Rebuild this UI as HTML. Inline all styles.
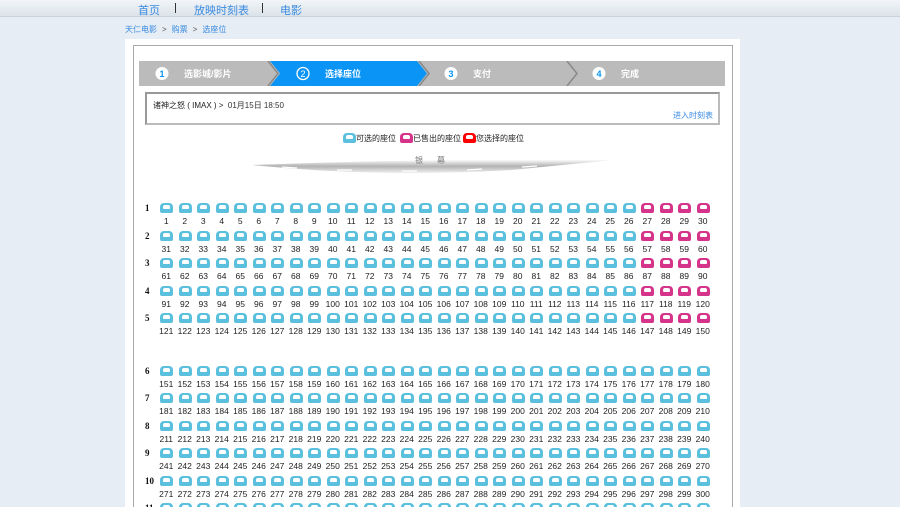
<!DOCTYPE html>
<html><head><meta charset="utf-8"><style>
*{margin:0;padding:0;box-sizing:border-box}
html,body{width:900px;height:507px;overflow:hidden}
body{background:#e6edf5;font-family:"Liberation Sans","Noto Sans CJK SC",sans-serif;position:relative}
.nav{position:absolute;left:0;top:0;width:900px;height:17px;background:linear-gradient(#f2f5f8,#dbe3ea);border-bottom:1px solid #c9d3dd}
.nav span{position:absolute;top:2px;font-size:11px;color:#3a8be0}
.nav .s{top:3px;width:1px;height:10px;background:#333}
.bc{position:absolute;left:125px;top:24px;font-size:8px;color:#3a8be0}
.bc em{font-style:normal;color:#555;margin:0 5px}
.panel{position:absolute;left:125px;top:39px;width:615px;height:480px;background:#fff}
.inner{position:absolute;left:133px;top:45px;width:600px;height:480px;border:1px solid #aaa}
.steps{position:absolute;left:139px;top:61px}
.info{position:absolute;left:145px;top:92px;width:575px;height:33px;border:2px solid #bbb;border-top-color:#999;border-left-color:#999;background:#fff}
.info .t{position:absolute;left:6px;top:6px;font-size:8px;color:#222}
.info .t b{font-weight:normal;color:#333}
.info .l{position:absolute;right:5px;top:16px;font-size:8px;color:#3a8be0}
.lg{position:absolute;top:133px;font-size:8px;color:#222}
.lg i{display:inline-block;width:13px;height:10px;border-radius:4px 4px 2px 2px;vertical-align:-2px;position:relative}
.lg i:after{content:"";position:absolute;left:3px;top:2px;width:7px;height:4px;background:#fff;border-radius:2px 2px 1px 1px}
.scr{position:absolute;left:415px;top:155px;font-size:8px;color:#777;letter-spacing:14px;z-index:2}
.r{position:absolute;left:157px;height:24px;display:flex}
.r b{position:absolute;left:-12px;top:0;font:bold 9px "Liberation Serif",serif;color:#111}
.r i{font-style:normal;width:18.5px;text-align:center;font-size:8.5px;color:#222;padding-top:13px;position:relative;line-height:10px}
.r i:before{content:"";position:absolute;left:3px;top:0;width:13px;height:10px;background:#5bc0de;border-radius:4px 4px 2px 2px}
.r i:after{content:"";position:absolute;left:6px;top:2px;width:7px;height:4px;background:#fff;border-radius:2px 2px 1px 1px}
.r i.p:before{background:#d6338a}
</style></head><body>
<div class="nav"><span style="left:138px">首页</span><span class="s" style="left:175px"></span><span style="left:194px">放映时刻表</span><span class="s" style="left:262px"></span><span style="left:280px">电影</span></div>
<div class="bc">天仁电影<em>&gt;</em>购票<em>&gt;</em>选座位</div>
<div class="panel"></div>
<div class="inner"></div>
<svg class="steps" width="586" height="25" style="font-family:'Liberation Sans','Noto Sans CJK SC',sans-serif">
<rect width="586" height="25" fill="#bbb"/>
<polygon points="131,0 278,0 288,12.5 278,25 131,25 141,12.5" fill="#0a94f5"/>
<polyline points="129,0 139,12.5 129,25" fill="none" stroke="#888" stroke-width="1.5"/>
<polyline points="280,0 290,12.5 280,25" fill="none" stroke="#888" stroke-width="1.5"/>
<polyline points="428,0 438,12.5 428,25" fill="none" stroke="#888" stroke-width="1.5"/>
<circle cx="23" cy="12.5" r="6.5" fill="#fff"/><text x="23" y="16" font-size="9" font-weight="bold" fill="#0a94f5" text-anchor="middle">1</text>
<text x="45" y="16" font-size="9" font-weight="bold" fill="#fff">选影城/影片</text>
<circle cx="164" cy="12.5" r="6" fill="none" stroke="#fff" stroke-width="1.3"/><text x="164" y="16" font-size="9" fill="#fff" text-anchor="middle">2</text>
<text x="186" y="16" font-size="9" font-weight="bold" fill="#fff">选择座位</text>
<circle cx="312" cy="12.5" r="6.5" fill="#fff"/><text x="312" y="16" font-size="9" font-weight="bold" fill="#0a94f5" text-anchor="middle">3</text>
<text x="334" y="16" font-size="9" font-weight="bold" fill="#fff">支付</text>
<circle cx="460" cy="12.5" r="6.5" fill="#fff"/><text x="460" y="16" font-size="9" font-weight="bold" fill="#0a94f5" text-anchor="middle">4</text>
<text x="482" y="16" font-size="9" font-weight="bold" fill="#fff">完成</text>
</svg>
<div class="info"><div class="t">诸神之怒 ( IMAX ) &gt; &nbsp;<b>01月15日 18:50</b></div><div class="l">进入时刻表</div></div>
<div class="lg" style="left:343px"><i style="background:#5bc0de"></i>可选的座位</div>
<div class="lg" style="left:400px"><i style="background:#d6338a"></i>已售出的座位</div>
<div class="lg" style="left:463px"><i style="background:#f00"></i>您选择的座位</div>
<div class="scr">银幕</div>
<svg style="position:absolute;left:252px;top:156px" width="365" height="22"><defs><linearGradient id="g" x1="0" y1="0" x2="0" y2="1"><stop offset="0" stop-color="#fff"/><stop offset="0.5" stop-color="#aaa"/><stop offset="1" stop-color="#eee"/></linearGradient></defs><path d="M0,9 Q180,2 362,4 Q300,10 260,14 Q130,22 0,9Z" fill="url(#g)" opacity="0.9"/><path d="M30,11 L45,12 M85,14 L100,14 M150,15 L165,15 M215,14 L230,13 M270,11 L285,10" stroke="#fff" stroke-width="1.2"/></svg>
<div class="r" style="top:203px"><b>1</b><i>1</i><i>2</i><i>3</i><i>4</i><i>5</i><i>6</i><i>7</i><i>8</i><i>9</i><i>10</i><i>11</i><i>12</i><i>13</i><i>14</i><i>15</i><i>16</i><i>17</i><i>18</i><i>19</i><i>20</i><i>21</i><i>22</i><i>23</i><i>24</i><i>25</i><i>26</i><i class="p">27</i><i class="p">28</i><i class="p">29</i><i class="p">30</i></div>
<div class="r" style="top:231px"><b>2</b><i>31</i><i>32</i><i>33</i><i>34</i><i>35</i><i>36</i><i>37</i><i>38</i><i>39</i><i>40</i><i>41</i><i>42</i><i>43</i><i>44</i><i>45</i><i>46</i><i>47</i><i>48</i><i>49</i><i>50</i><i>51</i><i>52</i><i>53</i><i>54</i><i>55</i><i>56</i><i class="p">57</i><i class="p">58</i><i class="p">59</i><i class="p">60</i></div>
<div class="r" style="top:258px"><b>3</b><i>61</i><i>62</i><i>63</i><i>64</i><i>65</i><i>66</i><i>67</i><i>68</i><i>69</i><i>70</i><i>71</i><i>72</i><i>73</i><i>74</i><i>75</i><i>76</i><i>77</i><i>78</i><i>79</i><i>80</i><i>81</i><i>82</i><i>83</i><i>84</i><i>85</i><i>86</i><i class="p">87</i><i class="p">88</i><i class="p">89</i><i class="p">90</i></div>
<div class="r" style="top:286px"><b>4</b><i>91</i><i>92</i><i>93</i><i>94</i><i>95</i><i>96</i><i>97</i><i>98</i><i>99</i><i>100</i><i>101</i><i>102</i><i>103</i><i>104</i><i>105</i><i>106</i><i>107</i><i>108</i><i>109</i><i>110</i><i>111</i><i>112</i><i>113</i><i>114</i><i>115</i><i>116</i><i class="p">117</i><i class="p">118</i><i class="p">119</i><i class="p">120</i></div>
<div class="r" style="top:313px"><b>5</b><i>121</i><i>122</i><i>123</i><i>124</i><i>125</i><i>126</i><i>127</i><i>128</i><i>129</i><i>130</i><i>131</i><i>132</i><i>133</i><i>134</i><i>135</i><i>136</i><i>137</i><i>138</i><i>139</i><i>140</i><i>141</i><i>142</i><i>143</i><i>144</i><i>145</i><i>146</i><i class="p">147</i><i class="p">148</i><i class="p">149</i><i class="p">150</i></div>
<div class="r" style="top:366px"><b>6</b><i>151</i><i>152</i><i>153</i><i>154</i><i>155</i><i>156</i><i>157</i><i>158</i><i>159</i><i>160</i><i>161</i><i>162</i><i>163</i><i>164</i><i>165</i><i>166</i><i>167</i><i>168</i><i>169</i><i>170</i><i>171</i><i>172</i><i>173</i><i>174</i><i>175</i><i>176</i><i>177</i><i>178</i><i>179</i><i>180</i></div>
<div class="r" style="top:393px"><b>7</b><i>181</i><i>182</i><i>183</i><i>184</i><i>185</i><i>186</i><i>187</i><i>188</i><i>189</i><i>190</i><i>191</i><i>192</i><i>193</i><i>194</i><i>195</i><i>196</i><i>197</i><i>198</i><i>199</i><i>200</i><i>201</i><i>202</i><i>203</i><i>204</i><i>205</i><i>206</i><i>207</i><i>208</i><i>209</i><i>210</i></div>
<div class="r" style="top:421px"><b>8</b><i>211</i><i>212</i><i>213</i><i>214</i><i>215</i><i>216</i><i>217</i><i>218</i><i>219</i><i>220</i><i>221</i><i>222</i><i>223</i><i>224</i><i>225</i><i>226</i><i>227</i><i>228</i><i>229</i><i>230</i><i>231</i><i>232</i><i>233</i><i>234</i><i>235</i><i>236</i><i>237</i><i>238</i><i>239</i><i>240</i></div>
<div class="r" style="top:448px"><b>9</b><i>241</i><i>242</i><i>243</i><i>244</i><i>245</i><i>246</i><i>247</i><i>248</i><i>249</i><i>250</i><i>251</i><i>252</i><i>253</i><i>254</i><i>255</i><i>256</i><i>257</i><i>258</i><i>259</i><i>260</i><i>261</i><i>262</i><i>263</i><i>264</i><i>265</i><i>266</i><i>267</i><i>268</i><i>269</i><i>270</i></div>
<div class="r" style="top:476px"><b>10</b><i>271</i><i>272</i><i>273</i><i>274</i><i>275</i><i>276</i><i>277</i><i>278</i><i>279</i><i>280</i><i>281</i><i>282</i><i>283</i><i>284</i><i>285</i><i>286</i><i>287</i><i>288</i><i>289</i><i>290</i><i>291</i><i>292</i><i>293</i><i>294</i><i>295</i><i>296</i><i>297</i><i>298</i><i>299</i><i>300</i></div>
<div class="r" style="top:503px"><b>11</b><i>301</i><i>302</i><i>303</i><i>304</i><i>305</i><i>306</i><i>307</i><i>308</i><i>309</i><i>310</i><i>311</i><i>312</i><i>313</i><i>314</i><i>315</i><i>316</i><i>317</i><i>318</i><i>319</i><i>320</i><i>321</i><i>322</i><i>323</i><i>324</i><i>325</i><i>326</i><i>327</i><i>328</i><i>329</i><i>330</i></div>
</body></html>
